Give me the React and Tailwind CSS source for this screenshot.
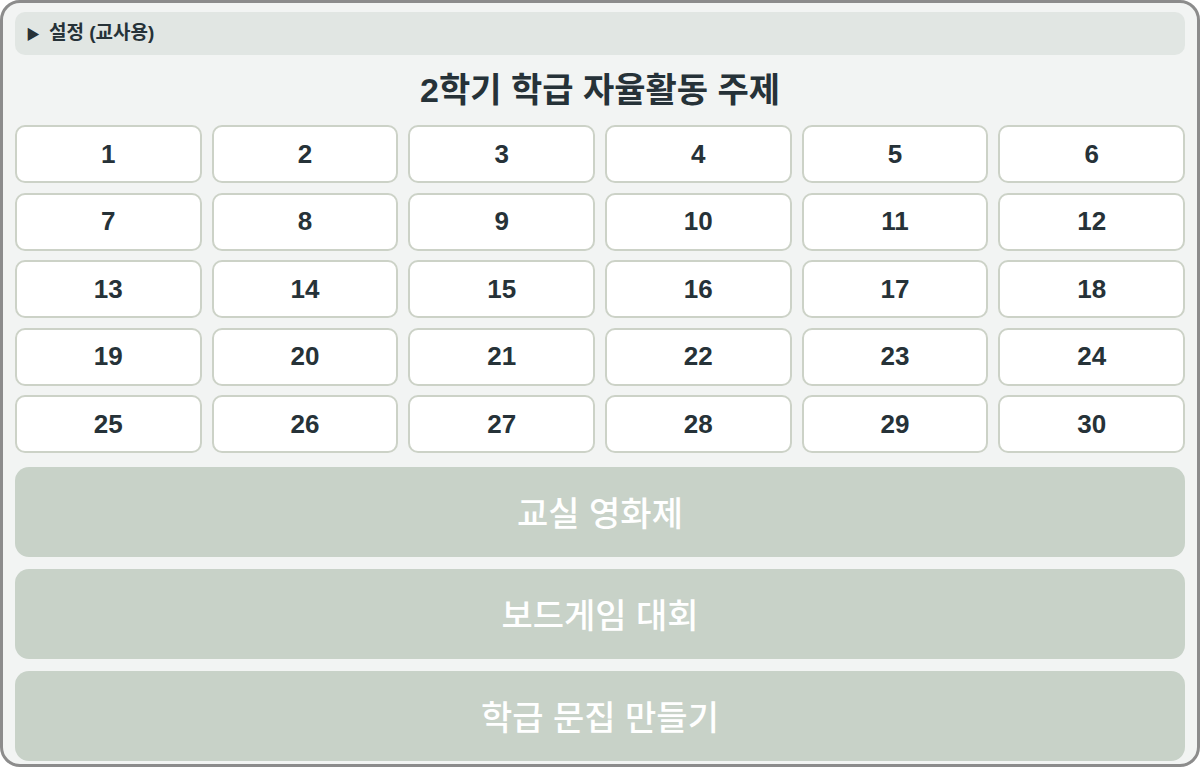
import { useState } from "react";

const topics = ["교실 영화제", "보드게임 대회", "학급 문집 만들기"];
const students = Array.from({ length: 30 }, (_, i) => i + 1);

export default function App() {
  const [open, setOpen] = useState(false);
  const [picked, setPicked] = useState(null);

  return (
    <div
      className="h-[767px] w-[1200px] overflow-hidden rounded-[20px] border-[3px] border-[#8c8c8c] bg-[#f2f4f3] px-3 pt-[9px] text-[#263238]"
      style={{ fontFamily: '"Liberation Sans", "Noto Sans CJK KR", sans-serif' }}
    >
      {/* 설정 토글 */}
      <div
        onClick={() => setOpen(!open)}
        className="flex h-[43px] cursor-pointer items-center gap-[9px] rounded-[10px] bg-[#e1e6e3] px-[11px] text-[19px] font-bold"
      >
        <span className="text-[14px] leading-none">▶</span>
        <span>설정 (교사용)</span>
      </div>

      <h1 className="mt-[10px] flex h-[50px] items-center justify-center text-[34px] font-bold">
        2학기 학급 자율활동 주제
      </h1>

      {/* 학생 번호 */}
      <div className="mt-[10px] grid grid-cols-6 gap-x-2.5 gap-y-[9.5px]">
        {students.map((n) => (
          <button
            key={n}
            onClick={() => setPicked(n)}
            className="flex h-[58px] items-center justify-center rounded-[10px] border-2 border-[#ccd2c7] bg-white text-[26px] font-bold text-[#263238]"
          >
            {n}
          </button>
        ))}
      </div>

      {/* 주제 */}
      <div className="mt-[14px] flex flex-col gap-3">
        {topics.map((t) => (
          <button
            key={t}
            className="flex h-[90px] items-center justify-center rounded-[14px] bg-[#c8d2c8] pt-[4px] text-[34px] font-medium text-white"
          >
            {t}
          </button>
        ))}
      </div>
    </div>
  );
}
